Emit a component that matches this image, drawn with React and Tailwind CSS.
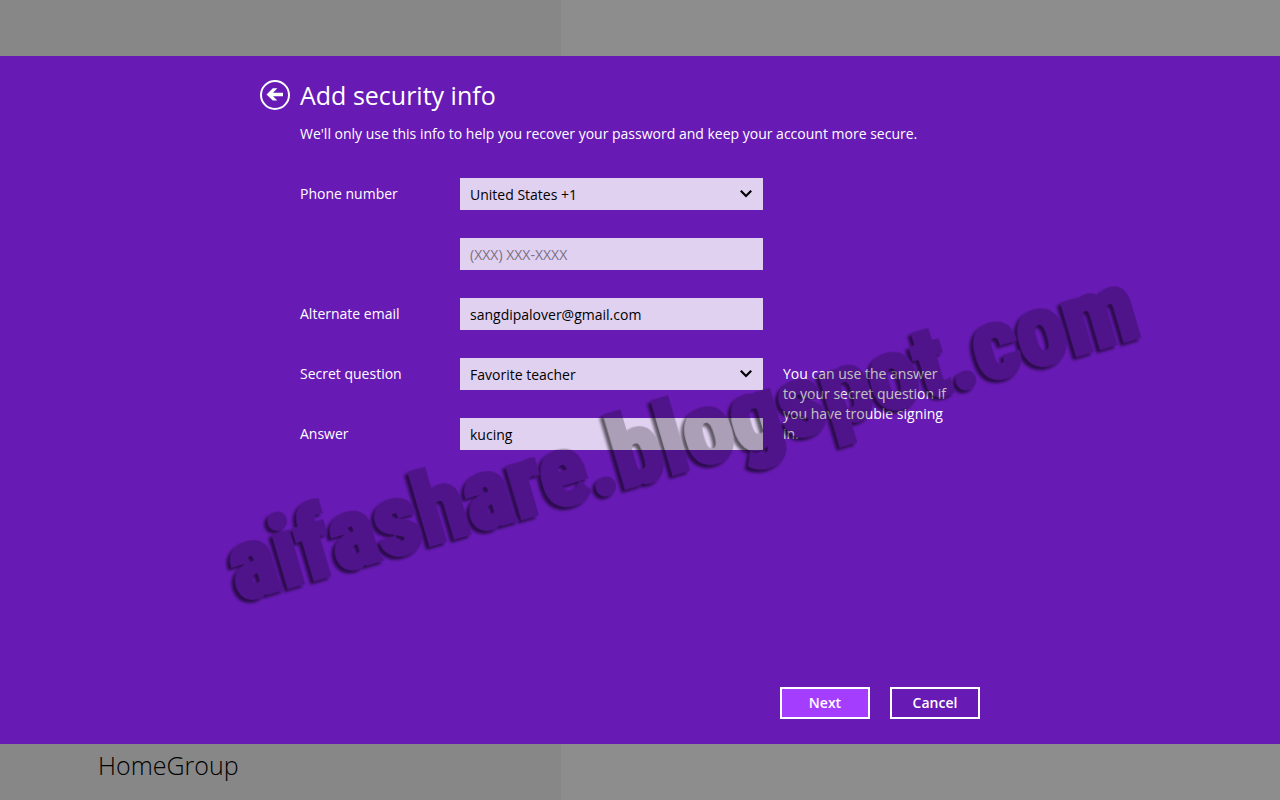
const fieldClass =
  'h-8 w-full rounded-none border-0 bg-[#e0d1f0] px-[10px] text-sm text-black outline-none placeholder:text-[#7b6f86] placeholder:opacity-100'

function BackIcon() {
  return (
    <svg viewBox="0 0 30 30" className="block h-[30px] w-[30px]" aria-hidden="true">
      <circle cx="15" cy="15" r="14" fill="none" stroke="#fff" strokeWidth="2" />
      <path d="M6.5 14.4 12.8 8.2H17.4L13 12.7H23V16.2H13L17.4 20.6H12.8Z" fill="#fff" />
    </svg>
  )
}

function Chevron() {
  return (
    <svg viewBox="0 0 12 8" className="pointer-events-none absolute top-3 right-[11px] h-2 w-3" aria-hidden="true">
      <path d="M0.8 0.8 6 6 11.2 0.8" fill="none" stroke="#000" strokeWidth="2.2" />
    </svg>
  )
}

function Row({ label, id, children, note }) {
  return (
    <div className="flex h-8 items-start">
      <label htmlFor={id} className="w-40 shrink-0 leading-8">
        {label}
      </label>
      <div className="relative w-[303px] shrink-0">{children}</div>
      {note && <p className="ml-5 w-[170px] pt-[6px] leading-5">{note}</p>}
    </div>
  )
}

function Select({ id, options }) {
  return (
    <>
      <select id={id} className={`${fieldClass} appearance-none pt-px`}>
        {options.map(o => (
          <option key={o}>{o}</option>
        ))}
      </select>
      <Chevron />
    </>
  )
}

function Watermark() {
  return (
    <svg
      viewBox="0 0 1280 688"
      className="pointer-events-none absolute inset-0 h-full w-full"
    >
      <defs>
        <filter id="emboss" x="-5%" y="-30%" width="110%" height="160%">
          <feGaussianBlur in="SourceAlpha" stdDeviation="1.6" />
          <feOffset dx="-4" dy="2" />
          <feComposite in2="SourceAlpha" operator="out" result="edge" />
          <feComponentTransfer in="edge" result="shadow">
            <feFuncA type="linear" slope="0.6" />
          </feComponentTransfer>
          <feComponentTransfer in="SourceAlpha" result="face">
            <feFuncA type="linear" slope="0.24" />
          </feComponentTransfer>
          <feMerge>
            <feMergeNode in="shadow" />
            <feMergeNode in="face" />
          </feMerge>
        </filter>
      </defs>
      <text
        x="0"
        y="0"
        transform="translate(239 545) rotate(-16.4)"
        filter="url(#emboss)"
        stroke="#000"
        strokeWidth="5"
        className="font-['Roboto_Condensed',sans-serif] text-[99px] font-bold"
      >
        aifashare.blogspot.com
      </text>
    </svg>
  )
}

export default function App() {
  return (
    <div className="flex min-h-screen flex-col bg-linear-to-r from-[#878787] from-[43.8%] to-[#8d8d8d] to-[43.8%] font-['Open_Sans','Noto_Sans',sans-serif]">
      <div className="h-14" />

      <main className="relative flex-1 bg-[#681ab5] text-sm text-white">
        <form className="mx-auto flex h-full max-w-[680px] flex-col" onSubmit={e => e.preventDefault()}>
          {/* Title */}
          <header className="-ml-10 flex items-center gap-[10px] pt-5">
            <button type="button" aria-label="Back">
              <BackIcon />
            </button>
            <h1 className="text-[25px] leading-[38px]">Add security info</h1>
          </header>
          <p className="mt-[10px] leading-5">
            We'll only use this info to help you recover your password and keep your account more secure.
          </p>

          {/* Fields */}
          <div className="mt-[34px] flex flex-col gap-7">
            <Row label="Phone number" id="country">
              <Select id="country" options={['United States +1', 'Indonesia +62']} />
            </Row>
            <Row id="phone">
              <input id="phone" type="tel" aria-label="Phone number" placeholder="(XXX) XXX-XXXX" className={fieldClass} />
            </Row>
            <Row label="Alternate email" id="email">
              <input id="email" type="email" defaultValue="sangdipalover@gmail.com" className={fieldClass} />
            </Row>
            <Row
              label="Secret question"
              id="question"
              note="You can use the answer to your secret question if you have trouble signing in."
            >
              <Select id="question" options={['Favorite teacher', 'Name of first pet']} />
            </Row>
            <Row label="Answer" id="answer">
              <input id="answer" type="text" defaultValue="kucing" className={fieldClass} />
            </Row>
          </div>

          {/* Actions */}
          <div className="mt-[237px] mb-[25px] flex justify-end gap-5 font-semibold">
            <button type="submit" className="h-8 w-[90px] border-2 border-white bg-[#a53dff]">
              Next
            </button>
            <button type="button" className="h-8 w-[90px] border-2 border-white">
              Cancel
            </button>
          </div>
        </form>
        <Watermark />
      </main>

      <footer className="h-14 pl-[98px]">
        <h2 className="text-[25px] leading-[42px] font-light text-black">HomeGroup</h2>
      </footer>
    </div>
  )
}
